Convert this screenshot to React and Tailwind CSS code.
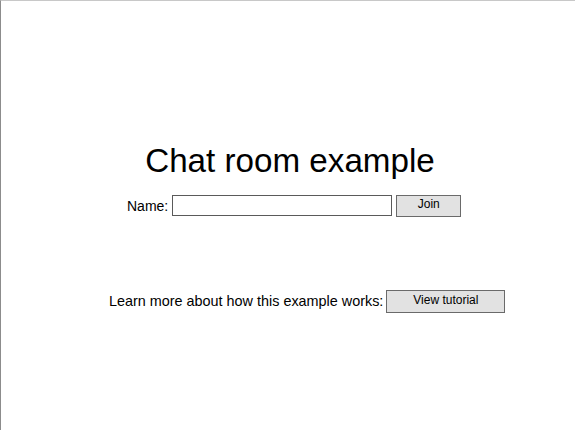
export default function App() {
  return (
    <div className="h-[430px] w-[575px] overflow-hidden bg-white border-t border-t-[#c8c8c8] border-l border-l-[#8c8c8c] font-['Liberation_Sans',Arial,sans-serif] text-black">
      <div className="pt-[141px]">
        <h1 className="text-[33.2px] leading-[38px] text-center pl-[4px]">Chat room example</h1>

        <div className="flex items-center mt-[14px] pl-[126px] h-[23px]">
          <span className="text-[14px] leading-none mr-[4px]">Name:</span>
          <input
            type="text"
            className="w-[220px] h-[21px] border border-[#5a5a5a] bg-white outline-none"
          />
          <button className="ml-[4px] w-[65px] h-[22px] bg-[#e2e2e2] border border-[#6a6a6a] text-[12px] leading-none pb-[4px]">
            Join
          </button>
        </div>

        <div className="flex items-center mt-[73px] pl-[108px] h-[23px]">
          <span className="text-[14.4px] leading-none mr-[3px]">Learn more about how this example works:</span>
          <button className="w-[119px] h-[23px] bg-[#e2e2e2] border border-[#6a6a6a] text-[12px] leading-none pb-[3px]">
            View tutorial
          </button>
        </div>
      </div>
    </div>
  );
}
